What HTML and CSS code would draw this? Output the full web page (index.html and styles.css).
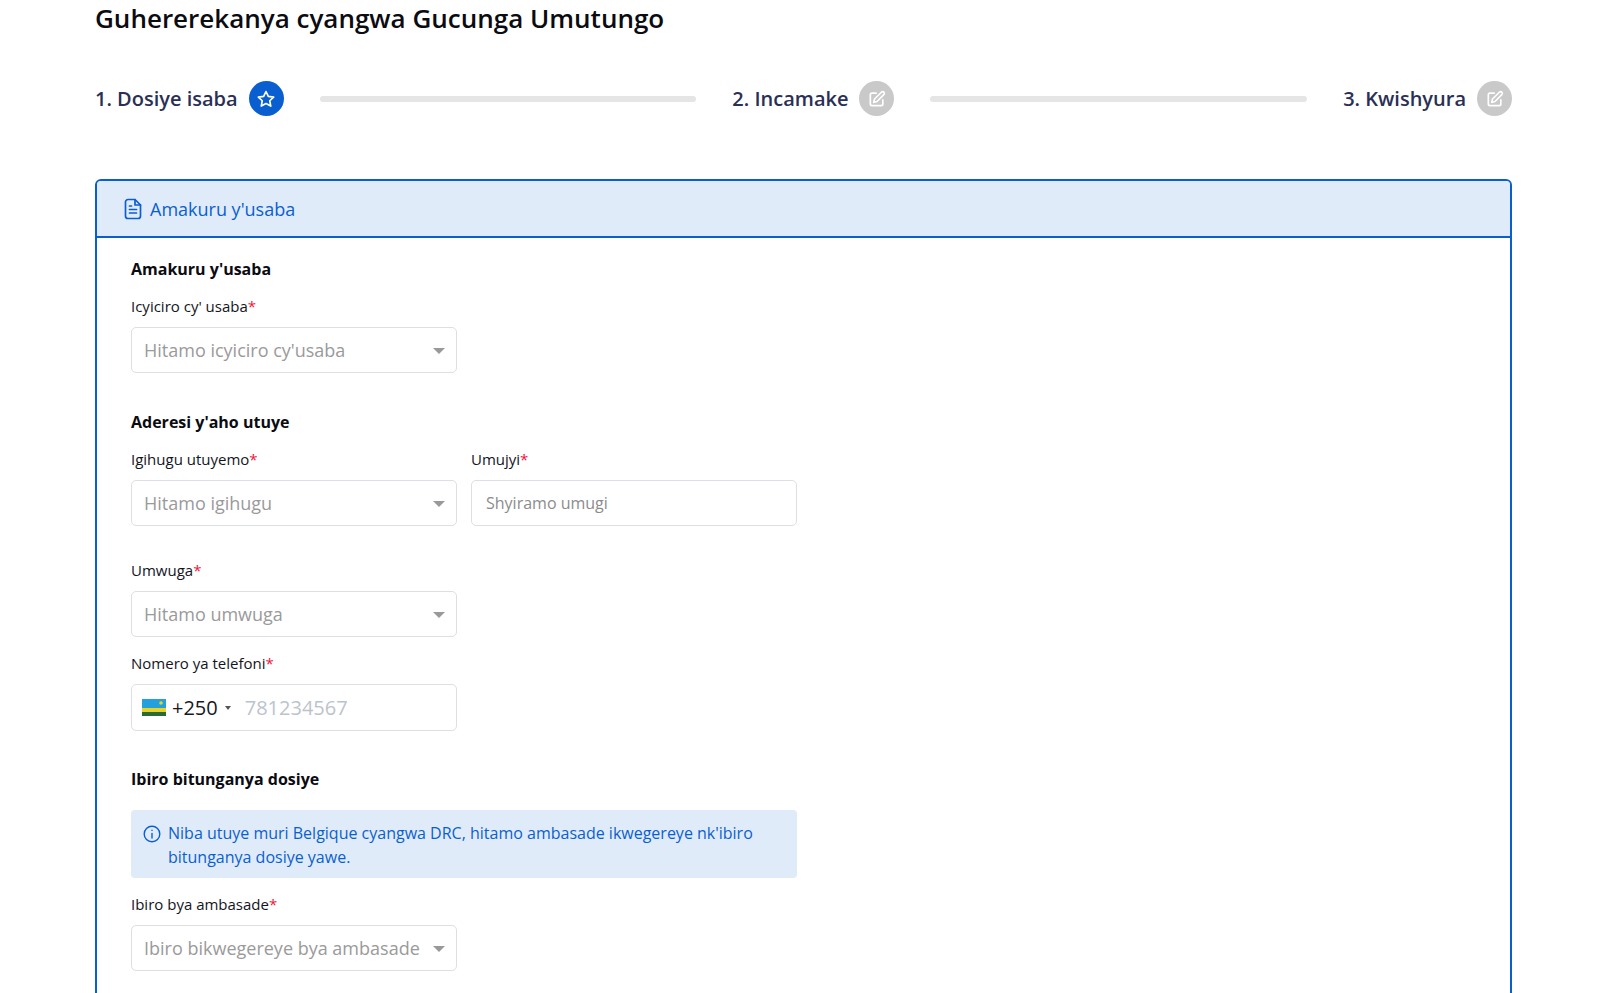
FILE: index.html
```html
<!DOCTYPE html>
<html lang="en">
<head>
    <meta charset="UTF-8">
    <meta name="viewport" content="width=device-width, initial-scale=1.0">
    <title>Guhererekanya cyangwa Gucunga Umutungo</title>
    <link rel="stylesheet" href="styles.css">
</head>
<body>
    <div class="page">
        <h1>Guhererekanya cyangwa Gucunga Umutungo</h1>

        <!-- Steps -->
        <div class="steps">
            <div class="step">
                <span class="step-name">1. Dosiye isaba</span>
                <span class="step-icon active">
                    <svg width="20" height="20" viewBox="0 0 24 24" fill="none" stroke="#fff" stroke-width="2" stroke-linejoin="round"><path d="M12 3l2.8 5.9 6.4.8-4.7 4.4 1.2 6.4L12 17.4l-5.7 3.1 1.2-6.4-4.7-4.4 6.4-.8z"/></svg>
                </span>
            </div>
            <div class="step-line"></div>
            <div class="step">
                <span class="step-name">2. Incamake</span>
                <span class="step-icon">
                    <svg width="20" height="20" viewBox="0 0 24 24" fill="none" stroke="#fff" stroke-width="2" stroke-linecap="round" stroke-linejoin="round"><path d="M11 5H6a2 2 0 0 0-2 2v11a2 2 0 0 0 2 2h11a2 2 0 0 0 2-2v-5"/><path d="M17.6 3.6a2 2 0 0 1 2.8 2.8L12 15l-4 1 1-4z"/></svg>
                </span>
            </div>
            <div class="step-line"></div>
            <div class="step">
                <span class="step-name">3. Kwishyura</span>
                <span class="step-icon">
                    <svg width="20" height="20" viewBox="0 0 24 24" fill="none" stroke="#fff" stroke-width="2" stroke-linecap="round" stroke-linejoin="round"><path d="M11 5H6a2 2 0 0 0-2 2v11a2 2 0 0 0 2 2h11a2 2 0 0 0 2-2v-5"/><path d="M17.6 3.6a2 2 0 0 1 2.8 2.8L12 15l-4 1 1-4z"/></svg>
                </span>
            </div>
        </div>

        <div class="card">
            <div class="card-header">
                <svg width="20" height="22" viewBox="0 0 20 22" fill="none" stroke="#0a5fd0" stroke-width="1.7" stroke-linecap="round" stroke-linejoin="round"><path d="M12 1.5H5a2.5 2.5 0 0 0-2.500 2.500v14A2.500 2.500 0 0 0 5 20.500h10a2.500 2.500 0 0 0 2.500-2.500V7z"/><path d="M12 1.500V7h5.500"/><path d="M6.500 11.500h7M6.500 15h7M6.500 8h2"/></svg>
                <span>Amakuru y'usaba</span>
            </div>
            <div class="card-body">
                <h3>Amakuru y'usaba</h3>
                <div class="field first">
                    <label>Icyiciro cy' usaba<span class="req">*</span></label>
                    <div class="select">Hitamo icyiciro cy'usaba</div>
                </div>

                <h3 class="section">Aderesi y'aho utuye</h3>
                <div class="row">
                    <div class="field first">
                        <label>Igihugu utuyemo<span class="req">*</span></label>
                        <div class="select">Hitamo igihugu</div>
                    </div>
                    <div class="field first">
                        <label>Umujyi<span class="req">*</span></label>
                        <div class="text-input">Shyiramo umugi</div>
                    </div>
                </div>

                <div class="field umwuga">
                    <label>Umwuga<span class="req">*</span></label>
                    <div class="select">Hitamo umwuga</div>
                </div>

                <div class="field phone-field">
                    <label>Nomero ya telefoni<span class="req">*</span></label>
                    <div class="phone">
                        <svg class="flag" width="24" height="17" viewBox="0 0 24 17"><rect width="24" height="9" fill="#24a0dc"/><rect y="9" width="24" height="4" fill="#e6d22a"/><rect y="13" width="24" height="4" fill="#2a6a34"/><circle cx="19" cy="4" r="1.800" fill="#e6d22a"/></svg>
                        <span class="dial">+250</span>
                        <span class="dial-caret"></span>
                        <span class="phone-hint">781234567</span>
                    </div>
                </div>

                <h3 class="section office">Ibiro bitunganya dosiye</h3>
                <div class="note">
                    <svg width="18" height="18" viewBox="0 0 18 18" fill="none" stroke="#0a5fd0" stroke-width="1.400" stroke-linecap="round"><circle cx="9" cy="9" r="7.800"/><path d="M9 8.500v4.500"/><path d="M9 5.300v.1"/></svg>
                    <p>Niba utuye muri Belgique cyangwa DRC, hitamo ambasade ikwegereye nk'ibiro bitunganya dosiye yawe.</p>
                </div>
                <div class="field embassy">
                    <label>Ibiro bya ambasade<span class="req">*</span></label>
                    <div class="select">Ibiro bikwegereye bya ambasade</div>
                </div>
            </div>
        </div>
    </div>
</body>
</html>
```

FILE: styles.css
```css
* {
    margin: 0;
    padding: 0;
    box-sizing: border-box;
}

html, body {
    height: 993px;
    overflow: hidden;
}

body {
    font-family: "Open Sans", "Noto Sans", sans-serif;
    background: #fff;
    color: #000;
}

.page {
    padding: 0 88px 0 95px;
}

h1 {
    font-size: 26px;
    font-weight: 600;
    line-height: 36px;
    color: #0b0b12;
}

/* Steps */
.steps {
    display: flex;
    align-items: center;
    margin-top: 45px;
}

.step {
    display: flex;
    align-items: center;
    gap: 11px;
}

.step-name {
    font-size: 20px;
    font-weight: 600;
    color: #2a2f55;
}

.step-icon {
    width: 35px;
    height: 35px;
    border-radius: 50%;
    background: #c9c9c9;
    display: flex;
    align-items: center;
    justify-content: center;
}

.step-icon.active {
    background: #0a5fd0;
}

.step-line {
    flex: 1;
    height: 6px;
    margin: 0 36px;
    border-radius: 3px;
    background: #e5e5e5;
}

/* Card */
.card {
    margin-top: 63px;
    border: 2px solid #0a5fd0;
    border-radius: 6px;
    height: 900px;
}

.card-header {
    height: 57px;
    background: #e0ebf9;
    border-bottom: 2px solid #0a5fd0;
    border-radius: 4px 4px 0 0;
    padding: 0 26px;
    display: flex;
    align-items: center;
    gap: 7px;
    font-size: 18px;
    color: #0a5fd0;
}

.card-body {
    padding: 20px 34px;
}

h3 {
    font-size: 16px;
    font-weight: 700;
    line-height: 22px;
    color: #0b0b12;
}

h3.section {
    margin-top: 38px;
}

h3.office {
    margin-top: 37px;
}

.field.first {
    margin-top: 15px;
}

label {
    display: block;
    font-size: 15px;
    line-height: 22px;
    color: #14141c;
    margin-bottom: 10px;
}

.req {
    color: #f0143c;
}

.select, .text-input, .phone {
    width: 326px;
    height: 46px;
    background: #fff;
    border: 1px solid #dcdfe4;
    border-radius: 5px;
    display: flex;
    align-items: center;
}

.select {
    padding: 0 12px;
    font-size: 18px;
    color: #9a9a9a;
    position: relative;
}

/* dropdown caret */
.select::after {
    content: "";
    position: absolute;
    right: 11px;
    top: 20px;
    border-left: 6px solid transparent;
    border-right: 6px solid transparent;
    border-top: 6px solid #999;
}

.text-input {
    padding: 0 14px;
    font-size: 16px;
    color: #8c8c8c;
}

.row {
    display: grid;
    grid-template-columns: 326px 326px;
    column-gap: 14px;
}

.umwuga {
    margin-top: 33px;
}

.phone-field {
    margin-top: 15px;
}

.phone {
    height: 47px;
    padding: 0 10px;
}

.flag {
    flex: none;
}

.dial {
    font-size: 20px;
    color: #17171f;
    margin-left: 6px;
}

.dial-caret {
    margin-left: 7px;
    border-left: 3px solid transparent;
    border-right: 3px solid transparent;
    border-top: 4px solid #555;
}

.phone-hint {
    font-size: 20px;
    color: #bcc3cc;
    margin-left: 14px;
}

.note {
    margin-top: 20px;
    width: 666px;
    height: 68px;
    background: #e0ebf9;
    border-radius: 4px;
    padding: 11px 12px;
    display: flex;
    gap: 7px;
    color: #0a5fd0;
    font-size: 16px;
    line-height: 24px;
}

.note svg {
    flex: none;
    margin-top: 4px;
}

.embassy {
    margin-top: 15px;
}
```
